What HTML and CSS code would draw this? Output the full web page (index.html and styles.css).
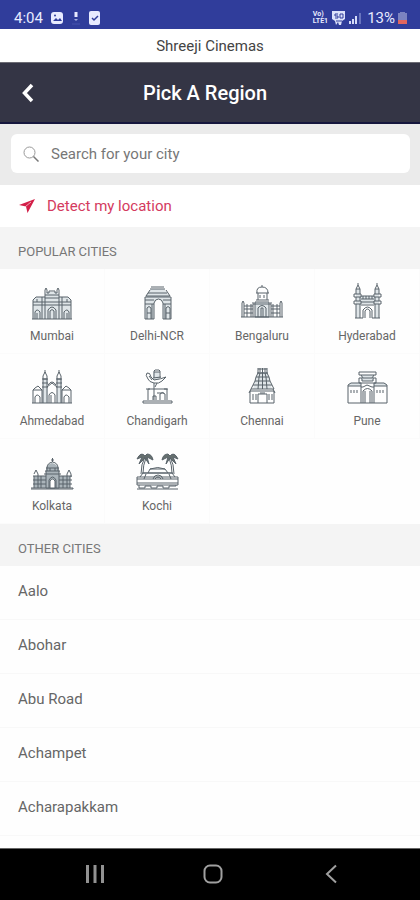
FILE: index.html
```html
<!DOCTYPE html>
<html lang="en">
<head>
    <meta charset="UTF-8">
    <meta name="viewport" content="width=device-width, initial-scale=1.0">
    <title>Pick A Region</title>
    <link rel="stylesheet" href="styles.css">
</head>
<body>
    <div class="status-bar">
        <div class="status-left">
            <span>4:04</span>
            <svg width="14" height="14" viewBox="0 0 14 14"><rect x="1" y="1" width="12" height="12" rx="3" fill="#e8ebff"/><path d="M3 10l3-3 2 2 2-2 2 3z" fill="#303d9b"/><circle cx="5" cy="4.500" r="1" fill="#303d9b"/></svg>
            <svg width="10" height="14" viewBox="0 0 10 14"><path d="M5 1v5" stroke="#e8ebff" stroke-width="3"/><path d="M3 8h4l-2 2z" fill="#a5afe0"/><path d="M1 13h8" stroke="#4755ad"/></svg>
            <svg width="12" height="14" viewBox="0 0 12 14"><rect x="1" y="0" width="11" height="14" rx="2" fill="#e8ebff"/><path d="M4 7l2 2 4-4" fill="none" stroke="#303d9b" stroke-width="1.500"/></svg>
        </div>
        <div class="status-right">
            <span class="volte">Vo)<br>LTE1</span>
            <svg width="15" height="14" viewBox="0 0 15 14"><path d="M1 0h13v8l-3 2-1 4H8l-1-3-2 3-1-4-3-2z" fill="#dce1fa"/><path d="M4 3h3M4 3v2h3v2H4M9 3h3v4H9zM5 10h6" fill="none" stroke="#303d9b"/></svg>
            <svg width="13" height="12" viewBox="0 0 13 12"><path d="M1 9v3M4 7v5M7 4v8" stroke="#d5dbf8" stroke-width="2"/><path d="M11 1v11" stroke="#6874bd" stroke-width="2"/></svg>
            <span class="percent">13%</span>
            <svg width="9" height="12" viewBox="0 0 9 12"><path d="M2 0h5v1h2v11H0V1h2z" fill="#7b83c0"/><path d="M0 8h9v4H0z" fill="#e0665f"/></svg>
        </div>
    </div>

    <div class="app-name">Shreeji Cinemas</div>

    <header>
        <button class="back-btn" aria-label="Back">
            <svg width="14" height="20" viewBox="0 0 14 20"><path d="M11 2L3.500 10l7.500 8" fill="none" stroke="#fff" stroke-width="3.500"/></svg>
        </button>
        <h1>Pick A Region</h1>
    </header>

    <main>
        <div class="search-area">
            <label class="search-box">
                <svg width="16" height="16" viewBox="0 0 16 16" fill="none" stroke="#999"><circle cx="6.500" cy="6.500" r="5.500"/><path d="M10.500 10.500l5 5" stroke="#777" stroke-width="1.500"/></svg>
                <input type="text" placeholder="Search for your city" aria-label="Search for your city">
            </label>
        </div>

        <button class="detect-btn">
            <svg width="18" height="16" viewBox="0 0 18 16"><path d="M17 1L1 7l7 1.500L9.500 15z" fill="#d31f48"/><path d="M13 4L7.500 8.500" stroke="#fff" stroke-width=".6"/></svg>
            Detect my location
        </button>

        <h2>POPULAR CITIES</h2>
        <div class="cities">
            <button class="city">
                <svg viewBox="0 0 48 38">
                    <path class="fill" d="M5 37V18l3-3h9l1-5h12l1 5h9l3 3v19z"/>
                    <path d="M5 37V18l3-3h9M43 37V18l-3-3h-9M4 37h40M5 20h38M5 23h38M17 37V10M31 37V10M17 10V8l1-2 1 2v3h2V9h6v2h2V8l1-2 1 2v2M17 13h14M17 16h14M14 15v22M34 15v22M20 37v-9q4-6 8 0v9M22 37v-8q2-3 4 0v8M7 37v-7q2-4 5 0v7M36 37v-7q3-4 5 0v7M9 37v-6M39 37v-6M9 17v3M39 17v3"/>
                </svg>
                Mumbai
            </button>
            <button class="city">
                <svg viewBox="0 0 48 38">
                    <path class="fill" d="M12 37V16l2-4 4-5h13l4 5 3 4v21h-8V21q-5-8-9 0v16z"/>
                    <path d="M18 5h13M17 7h15M17 8l-4 6h24l-4-6M15 11h19M12 15h26v22h-8V21q-1-4-4.500-4T21 21v16h-9V15M12 18h9M30 18h8M12 22h9M30 22h8M19 22v15M32 22v15M14 37V26q2-3 4 0v11M33 37V26q2-3 4 0v11M14 31h4M33 31h4"/>
                </svg>
                Delhi-NCR
            </button>
            <button class="city">
                <svg viewBox="0 0 48 38">
                    <path class="fill" d="M17 20h14v15H17z"/>
                    <path d="M24 3v2M19 11q-1-6 5-6t6 6M18 11h13M20 11v7M29 11v7M18 18h13M17 20h14v15H17zM15 22h18M3 35h42M4 35V21l1-2 1 2v14M9 35V22M13 35V22M35 35V22M39 35V22M42 35V21l1-2 1 2v14M6 24h9M6 27h9M6 31h9M33 24h9M33 27h9M33 31h9M15 20v15M33 20v15M20 35v-9q4-5 8 0v9M23 35v-9h2v9M22 13v3M26 13v3"/>
                </svg>
                Bengaluru
            </button>
            <button class="city">
                <svg viewBox="0 0 48 38">
                    <path class="fill" d="M13 7h4v29h-4zM32 7h4v29h-4zM17 14h15v8H17z"/>
                    <path d="M15 1v2M34 1v2M13 7l2-4 2 4zM32 7l2-4 2 4zM13 7v5M17 7v5M32 7v5M36 7v5M11 12h7v3h-7zM31 12h7v3h-7zM13 15v4M17 15v4M32 15v4M36 15v4M11 19h7v3h-7zM31 19h7v3h-7zM13 22v14M17 22v14M32 22v14M36 22v14M18 14h13M18 17h13M18 20h13M18 23h13M20 14v3M23 14v3M26 14v3M29 14v3M20 36v-8q4.500-6 9 0v8M22 36v-7q2.500-4 5 0v7M12 36h8M29 36h8"/>
                </svg>
                Hyderabad
            </button>
            <button class="city">
                <svg viewBox="0 0 48 38">
                    <path class="fill" d="M15 12h5v24h-5zM29 12h5v24h-5z"/>
                    <path d="M17 3v3M31 3v3M15 9l2-4 2 4v3h-4zM29 9l2-4 2 4v3h-4zM14 12h6M28 12h6M15 12v24M19 12v24M29 12v24M33 12v24M14 16h6M28 16h6M14 20h6M28 20h6M19 20l5-4 5 4M20 18q4-6 8 0M5 36V23l2-2 3-2 4 4v13M34 36V23l4-4 3 2 2 2v13M5 23h9M34 23h9M4 36h40M21 36v-8q3-5 6 0v8M23 36v-8M7 36v-6q2-4 5 0v6M36 36v-6q2-4 5 0v6"/>
                </svg>
                Ahmedabad
            </button>
            <button class="city">
                <svg viewBox="0 0 48 38">
                    <path class="fill" d="M20 5h6v8h-6z"/>
                    <path d="M21 11V4l1-1h4l1 1v7M21 5h6M20 11l8-1M21 16q-5-1-6-4-3-4-1-6 3-1 4 4l3 3q7-1 12-3l-4 4q-3 3-8 2zM16 9l3 4M21 16v17M24 16l-2 4M15 33V22h19v11M13 22h4M31 22h4M27 33v-6q2-3 5 0v6M24 26h7M20 33v-4h3v4M10 34h29v2H10z"/>
                </svg>
                Chandigarh
            </button>
            <button class="city">
                <svg viewBox="0 0 48 38">
                    <path class="fill" d="M20 5h9l5 17H15z"/>
                    <path d="M20 1v5h9V1M20 2h9M22 1v4M24.500 1v21M27 1v4M19 6h11M18 10h13M17 14h15M15 18h19M13 22h23M20 6l-2 4-1 4-2 4-2 4M29 6l2 4 1 4 2 4 2 4M22 6l-1 4-1 12M27 6l1 4 1 12M12 36V24h24v12zM20 36v-9h9v9M22 26h5M15 27v6M18 27v6M31 27v6M34 27v6M11 26l2-4M37 26l-2-4"/>
                </svg>
                Chennai
            </button>
            <button class="city">
                <svg viewBox="0 0 48 38">
                    <path class="fill" d="M6 16h12v3H6zM31 16h12v3H31zM18 8h13v6H18z"/>
                    <path d="M16 5h17v3H16zM18 8l2 3h9l2-3M16 11h3v3h11v-3h3v5H16zM5 36V18l3-2h10v20zM31 36V16h10l3 2v18zM5 19h13M31 19h13M8 23v3M11 23v3M14 23v3M34 23v3M37 23v3M40 23v3M18 20h2l4-2 5 2h2M20 36V24q4.500-5 9 0v12M22 36V24M27 36V24M18 36h13"/>
                </svg>
                Pune
            </button>
            <button class="city">
                <svg viewBox="0 0 48 38">
                    <path class="fill dark" d="M18 17q1-5 6-6 5 1 7 6v20H18zM6 24h12v12H6zM31 24h11v12H31z"/>
                    <path d="M24.500 6v4M23 8h3M19 16q0-5 5.500-6 5.500 1 5.500 6M18 16h13M17 19h15M19 16v3M22 16v3M27 16v3M30 16v3M16 22h17M18 19v17M31 19v17M6 24v12M42 24v12M6 22l2-4 2 4v14M39 36V22l2-4 2 4v3M5 24h13M31 24h13M5 28h13M31 28h13M5 32h13M31 32h13M13 24v12M35 24v12M3 36h42v1H3M21 36v-8q3.500-6 7 0v8"/>
                    <path class="light" d="M22 36v-7q2.500-4 5 0v7z"/>
                </svg>
                Kolkata
            </button>
            <button class="city">
                <svg viewBox="0 0 48 38">
                    <path class="leaf" d="M12 4q-4-5-8 3l5-2-3 7 6-6 4 6-2-7 6 3q-1-6-6-6zM37 4q4-5 8 3l-5-2 3 7-6-6-4 6 2-7-6 3q1-6 6-6z"/>
                    <path d="M12 5q-4 7-4 17M13 6q-3 7-3 15M37 5q4 7 4 17M36 6q3 7 3 15M4 25h41v8H4zM4 27h41M7 25l3-4h29l3 4M9 21h31M15 21l2-4h15l3 4M17 17q8-3 15 0M11 27l2-5M38 27l-2-5M20 27q1-4 5-4t5 4M22 27q3-4 6 0M6 33v3h6v-2h6v2h6v-2h6v2h6v-2h7v-1M4 31h41M4 37h41"/>
                </svg>
                Kochi
            </button>
        </div>

        <h2>OTHER CITIES</h2>
        <ul class="city-list">
            <li><a href="#">Aalo</a></li>
            <li><a href="#">Abohar</a></li>
            <li><a href="#">Abu Road</a></li>
            <li><a href="#">Achampet</a></li>
            <li><a href="#">Acharapakkam</a></li>
        </ul>
    </main>

    <nav class="nav-bar">
        <button aria-label="Recent apps">
            <svg width="20" height="20" viewBox="0 0 20 20"><path d="M2.500 1v18M10 1v18M17.500 1v18" stroke="#929292" stroke-width="3"/></svg>
        </button>
        <button aria-label="Home">
            <svg width="20" height="20" viewBox="0 0 20 20"><rect x="1.500" y="1.500" width="17" height="17" rx="5.500" fill="none" stroke="#a0a0a0" stroke-width="2"/></svg>
        </button>
        <button aria-label="Back">
            <svg width="20" height="20" viewBox="0 0 20 20"><path d="M15 1.500L6 10l9 8.500" fill="none" stroke="#a0a0a0" stroke-width="2"/></svg>
        </button>
    </nav>
</body>
</html>
```
FILE: styles.css
```css
* {
    box-sizing: border-box;
}

body {
    font-family: Roboto, 'Liberation Sans', sans-serif;
    font-size: 15px;
    margin: 0;
    min-height: 100vh;
    display: flex;
    flex-direction: column;
    background-color: #fefefe;
    color: #666;
}

button {
    font-family: inherit;
    border: none;
    padding: 0;
    background: none;
    color: inherit;
    cursor: pointer;
}

svg {
    display: block;
    flex-shrink: 0;
}

/* Phone status bar */
.status-bar {
    display: flex;
    justify-content: space-between;
    align-items: flex-end;
    height: 29px;
    padding: 0 13px 3px 14px;
    background-color: #303d9b;
    color: #e8ebff;
    line-height: 16px;
}

.status-left,
.status-right {
    display: flex;
    align-items: center;
}

.status-left {
    gap: 7px;
}

.status-right {
    gap: 3px;
}

.volte {
    font-size: 7px;
    line-height: 7px;
    font-weight: bold;
}

.percent {
    margin-left: 2px;
}

.app-name {
    height: 33px;
    line-height: 35px;
    text-align: center;
    background-color: #fff;
    color: #444;
}

/* Header */
header {
    display: grid;
    grid-template-columns: 56px 1fr 66px;
    align-items: center;
    height: 62px;
    background-color: #343545;
    border-top: 1px solid #6c6c74;
    border-bottom: 2px solid #15163d;
    color: #fff;
}

.back-btn {
    display: flex;
    justify-content: center;
}

h1 {
    margin: 0;
    font-size: 20px;
    font-weight: 500;
    text-align: center;
}

main {
    flex: 1;
}

.search-area {
    padding: 10px 10px 12px 11px;
    background-color: #ebebeb;
}

.search-box {
    display: flex;
    align-items: center;
    gap: 12px;
    height: 39px;
    padding: 0 12px;
    border-radius: 6px;
    background-color: #fff;
}

.search-box input {
    flex: 1;
    min-width: 0;
    padding: 0;
    border: none;
    outline: none;
    background: none;
    font-family: inherit;
    font-size: 15px;
    color: #666;
}

.search-box input::placeholder {
    color: #777;
}

.detect-btn {
    display: flex;
    align-items: center;
    gap: 11px;
    width: 100%;
    height: 42px;
    padding: 0 18px;
    background-color: #fff;
    font-size: 15px;
    color: #d43a5e;
}

h2 {
    margin: 0;
    padding: 5px 18px 0;
    height: 42px;
    line-height: 40px;
    font-size: 13px;
    font-weight: normal;
    background-color: #f4f4f4;
    color: #777;
}

/* Popular cities */
.cities {
    display: grid;
    grid-template-columns: repeat(4, 1fr);
    grid-auto-rows: 85px;
}

.city {
    display: flex;
    flex-direction: column;
    align-items: center;
    gap: 8px;
    padding-top: 13px;
    border-right: 1px solid #fbfbfb;
    border-bottom: 1px solid #fbfbfb;
    font-size: 12px;
    line-height: 16px;
}

.city svg {
    width: 48px;
    height: 38px;
    fill: none;
    stroke: #59636a;
    stroke-width: 1;
}

.city .fill {
    fill: #dfe5e8;
    stroke: none;
}

.city .dark {
    fill: #aab4ba;
}

.city .light {
    fill: #fff;
}

.city .leaf {
    fill: #66706f;
}

/* Other cities */
.city-list {
    list-style: none;
    margin: 0;
    padding: 0;
}

.city-list a {
    display: block;
    height: 54px;
    padding: 0 18px;
    line-height: 50px;
    border-bottom: 1px solid #f8f8f8;
    color: #666;
    text-decoration: none;
}

/* Phone navigation */
.nav-bar {
    display: flex;
    justify-content: space-around;
    align-items: center;
    height: 52px;
    padding: 0 30px 2px 36px;
    border-top: 1px solid #666;
    background-color: #000;
}
```
